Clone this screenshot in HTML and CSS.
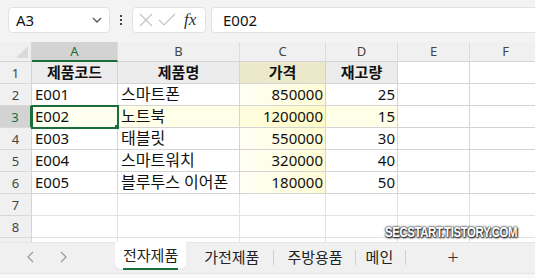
FILE: index.html
```
<!DOCTYPE html>
<html lang="ko">
<head>
<meta charset="UTF-8">
<title>전자제품</title>
<link rel="stylesheet" href="styles.css">
</head>
<body>

<div class="topbar">
    <div class="namebox">
        <span>A3</span>
        <svg width="12" height="8" viewBox="0 0 12 8"><path d="M2 2 L6 6 L10 2" fill="none" stroke="#555" stroke-width="1.3"/></svg>
    </div>
    <div class="dots"><i></i><i></i><i></i></div>
    <div class="fxbox">
        <svg width="16" height="16" viewBox="0 0 16 16"><path d="M2 2 L14 14 M14 2 L2 14" stroke="#c4c4c4" stroke-width="1.2"/></svg>
        <svg width="18" height="16" viewBox="0 0 18 16"><path d="M1 8 L6 13 L17 2" fill="none" stroke="#c4c4c4" stroke-width="1.2"/></svg>
        <span class="fx">fx</span>
    </div>
    <div class="formula">E002</div>
</div>

<div class="sheet">
    <div class="grid">
        <div class="corner"></div>
        <div class="colhead sel">A</div>
        <div class="colhead">B</div>
        <div class="colhead">C</div>
        <div class="colhead">D</div>
        <div class="colhead">E</div>
        <div class="colhead">F</div>
        <div class="colhead"></div>

        <div class="rowhead">1</div>
        <div class="cell head center">제품코드</div>
        <div class="cell head center">제품명</div>
        <div class="cell head price center">가격</div>
        <div class="cell head center">재고량</div>
        <div class="cell"></div><div class="cell"></div><div class="cell"></div>

        <div class="rowhead">2</div>
        <div class="cell">E001</div>
        <div class="cell ko">스마트폰</div>
        <div class="cell num yellow">850000</div>
        <div class="cell num">25</div>
        <div class="cell"></div><div class="cell"></div><div class="cell"></div>

        <div class="rowhead sel">3</div>
        <div class="cell active">E002</div>
        <div class="cell ko row3">노트북</div>
        <div class="cell num yellow strong">1200000</div>
        <div class="cell num row3">15</div>
        <div class="cell"></div><div class="cell"></div><div class="cell"></div>

        <div class="rowhead">4</div>
        <div class="cell">E003</div>
        <div class="cell ko">태블릿</div>
        <div class="cell num yellow">550000</div>
        <div class="cell num">30</div>
        <div class="cell"></div><div class="cell"></div><div class="cell"></div>

        <div class="rowhead">5</div>
        <div class="cell">E004</div>
        <div class="cell ko">스마트워치</div>
        <div class="cell num yellow">320000</div>
        <div class="cell num">40</div>
        <div class="cell"></div><div class="cell"></div><div class="cell"></div>

        <div class="rowhead">6</div>
        <div class="cell">E005</div>
        <div class="cell ko">블루투스 이어폰</div>
        <div class="cell num yellow">180000</div>
        <div class="cell num">50</div>
        <div class="cell"></div><div class="cell"></div><div class="cell"></div>

        <div class="rowhead">7</div>
        <div class="blank"></div><div class="blank"></div><div class="blank"></div><div class="blank"></div><div class="blank"></div><div class="blank"></div><div class="blank"></div>

        <div class="rowhead">8</div>
        <div class="blank"></div><div class="blank"></div><div class="blank"></div><div class="blank"></div><div class="blank"></div><div class="blank"></div><div class="blank"></div>

        <div class="rowhead"></div>
        <div class="blank"></div><div class="blank"></div><div class="blank"></div><div class="blank"></div><div class="blank"></div><div class="blank"></div><div class="blank"></div>
    </div>
    <div class="watermark">SECSTART.TISTORY.COM</div>
</div>

<div class="tabbar">
    <div class="nav">
        <svg width="10" height="14" viewBox="0 0 10 14"><path d="M7 2 L2 7 L7 12" fill="none" stroke="#9a9a9a" stroke-width="1.2"/></svg>
        <svg width="10" height="14" viewBox="0 0 10 14"><path d="M3 2 L8 7 L3 12" fill="none" stroke="#9a9a9a" stroke-width="1.2"/></svg>
    </div>
    <div class="tab current"><span>전자제품</span></div>
    <div class="tab first">가전제품</div>
    <div class="tab sep">주방용품</div>
    <div class="tab sep end">메인</div>
    <div class="addtab">+</div>
</div>
<div class="status"></div>

</body>
</html>
```

FILE: styles.css
```
body {
    margin: 0;
    width: 535px;
    height: 278px;
    overflow: hidden;
    background: #f3f3f3;
    font-family: "Noto Sans", "Noto Sans CJK KR", sans-serif;
    color: #111;
}

/* formula bar */
.topbar {
    display: flex;
    align-items: center;
    height: 26px;
    padding: 7px 0 9px 8px;
}

.namebox {
    width: 87px;
    height: 24px;
    background: #fff;
    border: 1px solid #e1e1e1;
    border-radius: 4px;
    display: flex;
    align-items: center;
    justify-content: space-between;
    padding: 0 6px 0 7px;
    font-size: 15px;
}

.dots {
    width: 22px;
    display: flex;
    flex-direction: column;
    align-items: center;
    gap: 2px;
}

.dots i {
    width: 2px;
    height: 2px;
    background: #444;
}

.fxbox {
    width: 67px;
    height: 24px;
    background: #fff;
    border: 1px solid #e1e1e1;
    border-radius: 4px;
    display: flex;
    align-items: center;
    gap: 4px;
    padding-left: 5px;
}

.fx {
    font-family: "Liberation Serif", serif;
    font-style: italic;
    font-size: 17px;
    color: #333;
    margin-left: 4px;
}

.formula {
    flex: 1;
    height: 24px;
    margin-left: 5px;
    background: #fff;
    border: 1px solid #e1e1e1;
    border-right: none;
    border-radius: 4px 0 0 4px;
    padding-left: 11px;
    font-size: 15px;
    line-height: 24px;
}

/* sheet grid */
.sheet {
    position: relative;
    height: 200px;
    overflow: hidden;
}

.grid {
    display: grid;
    grid-template-columns: 32px 86px 122px 86px 72px 72px 72px 65px;
    grid-template-rows: 20px repeat(9, 22px);
    background: #fff;
}

.corner {
    background: #f0f0f0;
    border-right: 1px solid #d4d4d4;
    border-bottom: 1px solid #d4d4d4;
    position: relative;
}

.corner::after {
    content: "";
    position: absolute;
    right: 3px;
    bottom: 3px;
    border-left: 12px solid transparent;
    border-bottom: 12px solid #dadada;
}

.colhead {
    background: #f0f0f0;
    border-right: 1px solid #dcdcdc;
    border-bottom: 1px solid #d4d4d4;
    font-size: 13px;
    color: #444;
    text-align: center;
    line-height: 19px;
}

.colhead.sel {
    background: #d3d3d3;
    color: #1b6d3c;
    border-bottom: 2px solid #1b6d3c;
    line-height: 18px;
}

.rowhead {
    background: #f0f0f0;
    border-right: 1px solid #d4d4d4;
    border-bottom: 1px solid #d8d8d8;
    font-size: 13px;
    color: #444;
    text-align: center;
    line-height: 22px;
}

.rowhead.sel {
    background: #d3d3d3;
    color: #1b6d3c;
    border-right: 2px solid #1b6d3c;
}

.cell {
    border-right: 1px solid #d4d4d4;
    border-bottom: 1px solid #d4d4d4;
    font-size: 15px;
    line-height: 21px;
    padding: 0 3px;
    white-space: nowrap;
    overflow: hidden;
}

.cell.ko {
    font-size: 16px;
}

.blank {
    border-right: 1px solid #e2e2e2;
    border-bottom: 1px solid #e2e2e2;
}

.head {
    background: #ececec;
    font-weight: bold;
}

.head.price {
    background: #ebe9c9;
}

.center {
    text-align: center;
}

.num {
    text-align: right;
    padding-right: 2px;
}

.yellow {
    background: linear-gradient(90deg, #fffff6, #fffcd4);
}

.yellow.strong {
    background: linear-gradient(90deg, #fffde0, #fffbc4);
}

.row3 {
    background: #fffee6;
}

.active {
    background: #fffff0;
    outline: 2px solid #1b6d3c;
    outline-offset: -1px;
    position: relative;
    z-index: 1;
}

.active::after {
    content: "";
    position: absolute;
    right: -4px;
    bottom: -4px;
    width: 5px;
    height: 5px;
    background: #1b6d3c;
    border: 1px solid #fff;
}

.watermark {
    position: absolute;
    left: 385px;
    top: 181px;
    width: 190px;
    white-space: nowrap;
    font-family: "Liberation Sans", sans-serif;
    font-weight: bold;
    font-size: 15px;
    color: #fff;
    letter-spacing: -0.5px;
    transform: scaleX(0.76);
    transform-origin: left top;
    text-shadow: 0 0 2px #222, 0 0 3px #333, 1px 1px 2px #000;
}

/* sheet tabs */
.tabbar {
    display: flex;
    align-items: flex-start;
    height: 30px;
    background: #f0f0f0;
    border-top: 1px solid #e6e6e6;
    font-size: 15px;
    color: #222;
}

.nav {
    width: 115px;
    height: 28px;
    display: flex;
    align-items: center;
    gap: 22px;
    padding-left: 26px;
    box-sizing: border-box;
}

.tab {
    padding: 0 13px;
    line-height: 28px;
    position: relative;
}

.tab.first {
    padding-left: 18px;
    padding-right: 14px;
}

.tab.sep {
    padding: 0 12px 0 14px;
}

.tab.sep.end {
    padding: 0 13px 0 11px;
}

.tab.sep::before,
.tab.end::after {
    content: "";
    position: absolute;
    top: 7px;
    height: 15px;
    border-left: 1px solid #cfcfcf;
}

.tab.sep::before {
    left: 0;
}

.tab.end::after {
    right: 0;
}

.tab.current {
    background: #fff;
    border-radius: 0 0 6px 6px;
    padding: 0 8px;
    margin-top: -1px;
    height: 27px;
    line-height: 26px;
    box-shadow: 0 1px 1px #e2e2e2;
}

.tab.current span {
    display: inline-block;
    border-bottom: 2px solid #1b6d3c;
}

.addtab {
    padding-left: 41px;
    font-size: 20px;
    line-height: 27px;
    font-weight: 300;
    color: #333;
}

.status {
    height: 6px;
    background: #f8f8f8;
    border-top: 1px solid #e4e4e4;
}
```
